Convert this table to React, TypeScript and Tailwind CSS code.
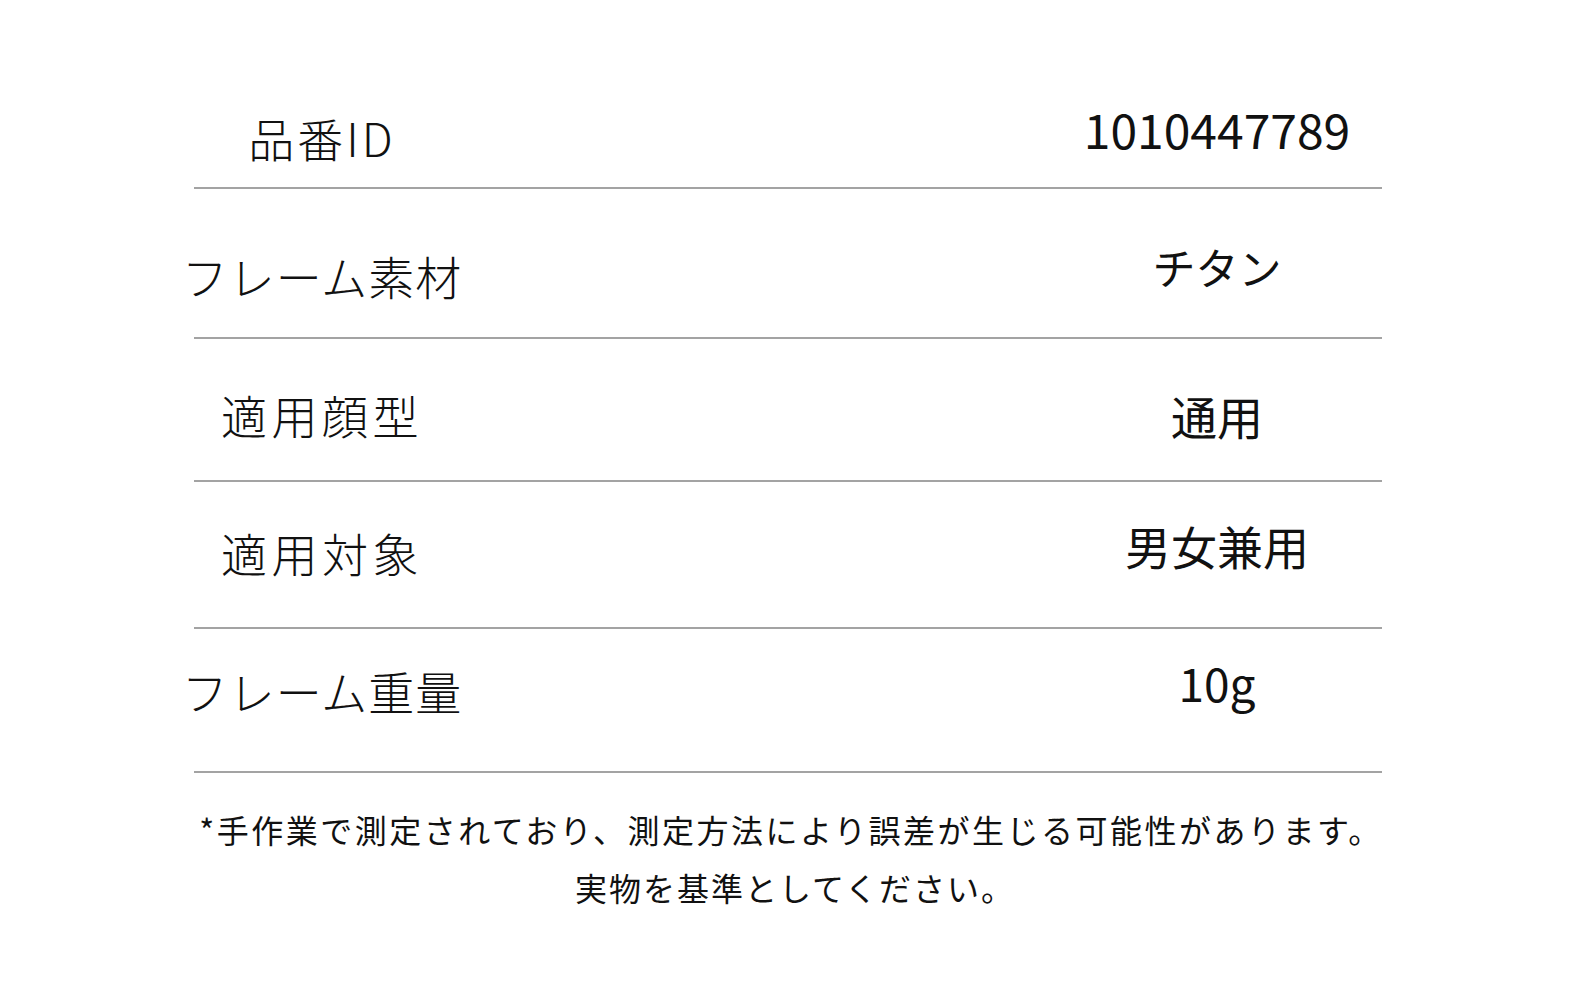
import React from "react";

const rows = [
  { label: "品番ID", value: "1010447789", h: 189, lt: 114, vt: 104, lcls: "tracking-[3px]", vcls: "text-[48px]" },
  { label: "フレーム素材", value: "チタン", h: 150, lt: 63, vt: 56, lcls: "tracking-[1px]", vcls: "text-[43px]" },
  { label: "適用顔型", value: "通用", h: 143, lt: 52, vt: 53, lcls: "tracking-[4.5px]", vcls: "text-[46px]" },
  { label: "適用対象", value: "男女兼用", h: 147, lt: 47, vt: 40, lcls: "tracking-[4.5px]", vcls: "text-[46px]" },
  { label: "フレーム重量", value: "10g", h: 144, lt: 38, vt: 30, lcls: "tracking-[1px]", vcls: "text-[46px]" },
];

export default function App() {
  return (
    <div
      className="w-[1580px] h-[990px] bg-white text-[#111] overflow-hidden"
      style={{ fontFamily: '"Noto Sans CJK JP", "Noto Sans", sans-serif' }}
    >
      <div className="ml-[194px] w-[1188px] flex flex-col">
        {rows.map((r, i) => (
          <div key={i} className="flex flex-col" style={{ height: r.h }}>
            <div className="flex-1 flex justify-between">
              <div className="w-[256px] flex justify-center" style={{ paddingTop: r.lt }}>
                <span className={`whitespace-nowrap text-[46px] leading-none font-extralight ${r.lcls}`}>{r.label}</span>
              </div>
              <div className="w-[330px] flex justify-center" style={{ paddingTop: r.vt }}>
                <span className={`whitespace-nowrap leading-none font-normal ${r.vcls}`}>{r.value}</span>
              </div>
            </div>
            <div className="h-[2px] bg-[#a3a3a3]" />
          </div>
        ))}
        <div className="pt-[27px] flex flex-col items-center text-[#111]">
          <p className="whitespace-nowrap text-[32px] leading-[58px] tracking-[2.5px] pl-[6px]">*手作業で測定されており、測定方法により誤差が生じる可能性があります。</p>
          <p className="whitespace-nowrap text-[32px] leading-[58px] tracking-[2px] pl-[14px]">実物を基準としてください。</p>
        </div>
      </div>
    </div>
  );
}
